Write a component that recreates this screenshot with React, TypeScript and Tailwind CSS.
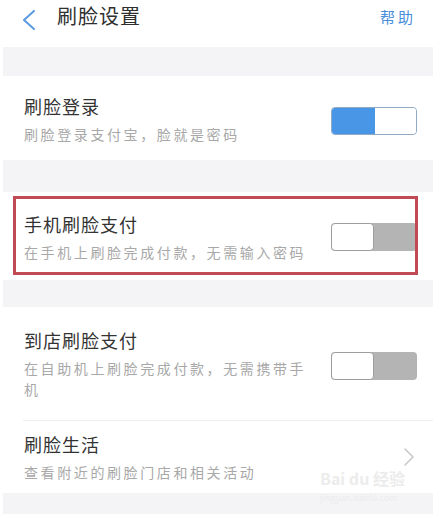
import React from "react";

const FONT = { fontFamily: '"Noto Sans CJK SC", "Noto Sans", sans-serif' };

function ToggleOn() {
  return (
    <div className="flex h-[28px] w-[86px] shrink-0 overflow-hidden rounded-[4px] border border-[#8fa9c6]">
      <div className="h-full w-[43px] bg-[#4a96e6]" />
      <div className="h-full flex-1 rounded-[3px] bg-white" />
    </div>
  );
}

function ToggleOff() {
  return (
    <div className="flex h-[28px] w-[86px] shrink-0 overflow-hidden rounded-[4px] bg-[#b4b4b4]">
      <div className="h-full w-[43px] rounded-[4px] border border-[#9d9d9d] bg-white" />
    </div>
  );
}

function Texts({ title, sub }: { title: string; sub: string }) {
  return (
    <div className="w-[292px]">
      <div className="text-[18px] leading-[24px] tracking-[1px] text-[#333333]">{title}</div>
      <div className="mt-[6px] text-[14px] leading-[21px] tracking-[2.6px] text-[#a8a8a8]">{sub}</div>
    </div>
  );
}

export default function App() {
  return (
    <div className="relative h-[514px] w-[437px] overflow-hidden bg-white" style={FONT}>
      {/* Header */}
      <div className="flex h-[47px] items-start pt-[3px]">
        <svg className="ml-[22px] mt-[7px]" width="14" height="20" viewBox="0 0 14 20">
          <polyline points="12,1 2,10 12,19" fill="none" stroke="#5a9ae0" strokeWidth="2" strokeLinecap="round" strokeLinejoin="round" />
        </svg>
        <div className="ml-[21px] text-[20px] leading-[26px] tracking-[1px] text-[#2e2e2e]">刷脸设置</div>
        <div className="ml-auto mr-[21px] mt-[1px] text-[15px] leading-[26px] tracking-[3px] text-[#4a8fdb]">帮助</div>
      </div>

      <div className="ml-[3px] mr-[4px] h-[29px] bg-[#f4f4f6]" />

      {/* Row 1 */}
      <div className="flex h-[84px] items-start pl-[24px] pr-[20px] pt-[18px]">
        <Texts title="刷脸登录" sub="刷脸登录支付宝，脸就是密码" />
        <div className="ml-auto mt-[13px]">
          <ToggleOn />
        </div>
      </div>

      <div className="ml-[3px] mr-[4px] h-[32px] bg-[#f4f4f6]" />

      {/* Row 2 */}
      <div className="relative flex h-[88px] items-start pl-[24px] pr-[20px] pt-[20px]">
        <Texts title="手机刷脸支付" sub="在手机上刷脸完成付款，无需输入密码" />
        <div className="ml-auto mt-[11px]">
          <ToggleOff />
        </div>
        <div className="absolute left-[13px] top-[4px] h-[79px] w-[405px] border-[3px] border-[#c14a55]" />
      </div>

      <div className="ml-[3px] mr-[4px] h-[27px] bg-[#f4f4f6]" />

      {/* Row 3 */}
      <div className="flex h-[113px] items-start pl-[24px] pr-[20px] pt-[21px]">
        <Texts title="到店刷脸支付" sub="在自助机上刷脸完成付款，无需携带手机" />
        <div className="ml-auto mt-[24px]">
          <ToggleOff />
        </div>
      </div>
      <div className="ml-[23px] mr-[4px] h-px bg-[#eeeeee]" />

      {/* Row 4 */}
      <div className="relative flex h-[72px] items-start pl-[24px] pr-[22px] pt-[11px]">
        <Texts title="刷脸生活" sub="查看附近的刷脸门店和相关活动" />
        <svg className="ml-auto mt-[16px]" width="12" height="18" viewBox="0 0 12 18">
          <polyline points="2,1 10,9 2,17" fill="none" stroke="#c8c8c8" strokeWidth="1.6" strokeLinecap="round" strokeLinejoin="round" />
        </svg>
      </div>

      <div className="ml-[3px] mr-[4px] h-[30px] bg-[#f4f4f6]" />

      {/* Watermark */}
      <div className="pointer-events-none absolute left-[320px] top-[467px] flex w-[100px] flex-col gap-[3px] whitespace-nowrap">
        <div className="text-[16px] font-bold leading-[22px] text-[#ececec]">Bai du 经验</div>
        <div className="text-[9px] leading-[11px] text-[#ececec]">jingyan.baidu.com</div>
      </div>
    </div>
  );
}
